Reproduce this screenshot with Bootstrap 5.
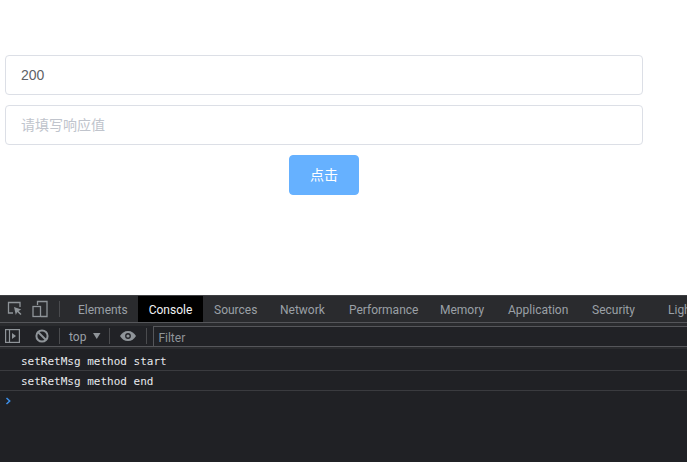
<!DOCTYPE html>
<html lang="zh"><head><meta charset="utf-8"><title>Console</title>
<link href="https://cdn.jsdelivr.net/npm/bootstrap@5.3.0/dist/css/bootstrap.min.css" rel="stylesheet">
<style>
html,body{height:462px;overflow:hidden;background:#fff;margin:0}
body{font-family:"Liberation Sans","Noto Sans CJK SC",sans-serif}
.pagezone{height:295px;padding:55px 44px 0 5px}
.fld{height:40px;margin-bottom:10px;font-size:14px;color:#606266;border:1px solid #dcdfe6;border-radius:4px;padding:0 15px;font-family:"Liberation Sans","Noto Sans CJK SC",sans-serif;box-shadow:none}
.fld::placeholder{color:#c0c4cc;opacity:1}
.gobtn{width:70px;height:40px;padding:0;font-size:14px;background:#66b1ff;border:1px solid #66b1ff;border-radius:4px;color:#fff}
.dev{height:167px;background:#202125;color:#9aa0a6;font-family:Roboto,"Liberation Sans",sans-serif;font-size:12px;overflow:hidden}
.tabbar{height:28px;background:#2a2b2e;border-top:1px solid #3f4043;border-bottom:1px solid #55565a;white-space:nowrap}
.tabbar svg,.toolbar svg{flex:none}
.tabx{height:26px;line-height:26px;padding-top:1px;flex:none;font-size:12px;color:#9aa0a6}
.tabon{background:#000;color:#f1f3f4;width:65px;text-align:center}
.vsep{width:1px;height:16px;background:#4a4b4e;flex:none}
.bandtop{height:3px;background:#2a2b2e}
.bandlow{height:2px;background:#2a2b2e}
.toolbar{height:21px;background:#212226;border-bottom:1px solid #55565a;white-space:nowrap}
.toptxt{margin-left:9px;padding-top:2px;font-size:12px;color:#9aa0a6}
.filt{width:534px;height:20px;border:1px solid #55565a;border-right:0;border-bottom:0;padding:1px 0 0 4px;line-height:20px;color:#8f9499;flex:none}
.logline{height:20px;padding:1px 0 0 21px;border-bottom:1px solid #3a3b3f;font-family:"DejaVu Sans Mono","Liberation Mono",monospace;font-size:11px;line-height:20px;color:#e8eaed;white-space:pre}
.logfirst{height:22px;line-height:24px}
.promptline{height:20px;padding:6px 0 0 5px}
</style></head><body>
<div class="pagezone">
<input class="form-control fld" value="200">
<input class="form-control fld" placeholder="请填写响应值">
<div class="text-center"><button class="btn gobtn" type="button">点击</button></div>
</div>
<div class="dev">
<div class="tabbar d-flex align-items-center">
<svg width="16" height="16" viewBox="0 0 16 16" fill="none" stroke="#8f9499" stroke-width="1.300" style="margin-left:7px"><path d="M6 12H1.500V1.500H13V6"/><path d="M7 6l1.800 8 1.400-3 3.300 3 1-1-3-3 2.800-1.500z" fill="#8f9499" stroke="none"/></svg>
<svg width="16" height="18" viewBox="0 0 16 18" fill="none" stroke="#8f9499" stroke-width="1.300" style="margin-left:9px"><path d="M5.500 5V1.500H15V16.500H9"/><rect x="1" y="6.500" width="7.500" height="10"/></svg>
<span class="vsep" style="margin-left:11px"></span>
<span class="tabx" style="margin-left:18px;width:48px">Elements</span>
<span class="tabx tabon" style="margin-left:12px">Console</span>
<span class="tabx" style="margin-left:11px;width:42px">Sources</span>
<span class="tabx" style="margin-left:24px;width:45px">Network</span>
<span class="tabx" style="margin-left:24px;width:67px">Performance</span>
<span class="tabx" style="margin-left:24px;width:45px">Memory</span>
<span class="tabx" style="margin-left:23px;width:61px">Application</span>
<span class="tabx" style="margin-left:23px;width:43px">Security</span>
<span class="tabx" style="margin-left:33px;width:19px;overflow:hidden">Ligh</span>
</div>
<div class="bandtop"></div>
<div class="toolbar d-flex align-items-center">
<svg width="15" height="14" viewBox="0 0 15 14" fill="none" stroke="#8f9499" stroke-width="1.200" style="margin-left:5px"><rect x=".6" y=".6" width="13.800" height="12.800"/><path d="M4.500 1v12"/><path d="M7 4l4 3-4 3z" fill="#8f9499" stroke="none"/></svg>
<svg width="14" height="14" viewBox="0 0 14 14" fill="none" stroke="#8f9499" stroke-width="2" style="margin-left:15px"><circle cx="7" cy="7" r="5.600"/><path d="M3 3l8 8"/></svg>
<span class="vsep" style="margin-left:10px"></span>
<span class="toptxt">top</span>
<svg width="8" height="6" viewBox="0 0 8 6" style="margin-left:7px"><path d="M0 0h7.500L3.750 6z" fill="#8f9499"/></svg>
<span class="vsep" style="margin-left:8px"></span>
<svg width="16" height="10" viewBox="0 0 16 10" style="margin-left:10px"><path d="M8 0C4.500 0 1.700 2 0 5c1.700 3 4.500 5 8 5s6.300-2 8-5c-1.700-3-4.500-5-8-5z" fill="#8f9499"/><circle cx="8" cy="5" r="2.900" fill="#212226"/><circle cx="8" cy="5" r="1.600" fill="#8f9499"/></svg>
<span class="vsep" style="margin-left:10px"></span>
<span class="filt" style="margin-left:6px">Filter</span>
</div>
<div class="bandlow"></div>
<div class="logline logfirst">setRetMsg method start</div>
<div class="logline">setRetMsg method end</div>
<div class="promptline"><svg width="7" height="8" viewBox="0 0 7 8" fill="none" stroke="#3d8fe8" stroke-width="1.500" class="d-block"><path d="M1.500 1l3.200 3-3.200 3"/></svg></div>
</div>
<script src="https://cdn.jsdelivr.net/npm/bootstrap@5.3.0/dist/js/bootstrap.bundle.min.js"></script>
</body></html>
